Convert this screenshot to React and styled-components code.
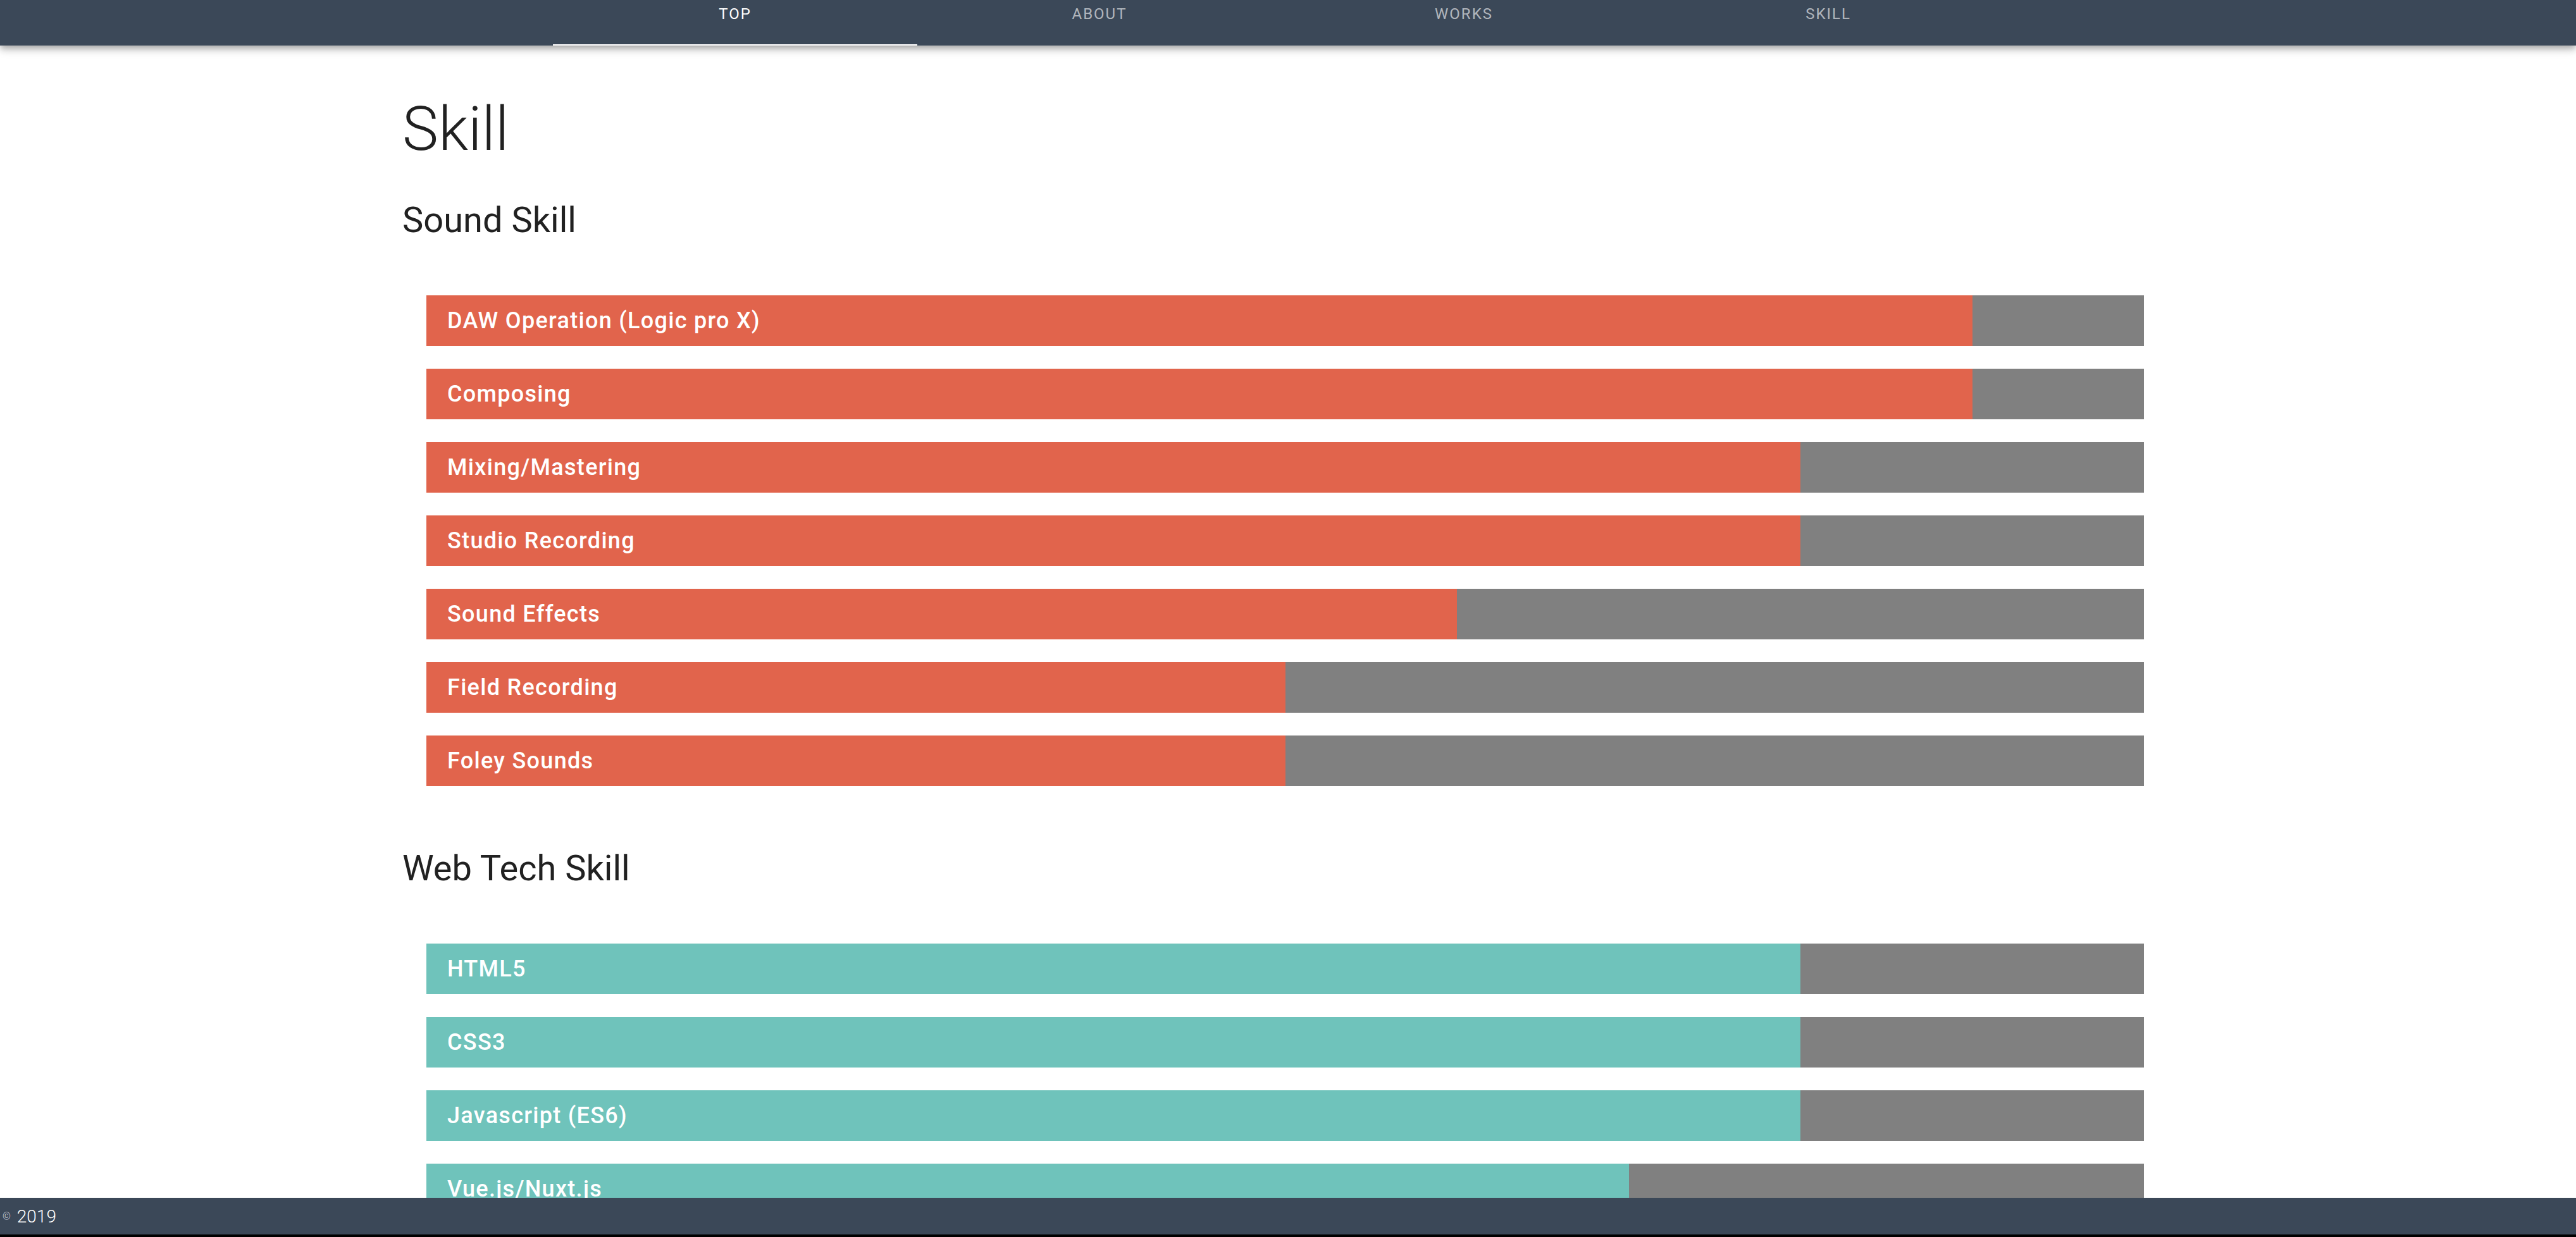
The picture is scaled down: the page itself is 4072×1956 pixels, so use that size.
import React from 'react';
import styled, {createGlobalStyle} from 'styled-components';

const GlobalStyle = createGlobalStyle`
    html, body {
        margin: 0;
        padding: 0;
        background: #ffffff;
        font-family: Roboto, "Liberation Sans", sans-serif;
    }
    * {
        box-sizing: border-box;
    }
`

const NavBar = styled.nav`
    height: 72px;
    background-color: #3b4858;
    display: flex;
    justify-content: center;
    padding-right: 20px;
    box-shadow: 0 4px 8px -2px rgba(0, 0, 0, .2), 0 8px 10px 0 rgba(0, 0, 0, .14), 0 2px 20px 0 rgba(0, 0, 0, .12);
    position: relative;
    z-index: 2;
`

const Tab = styled.a`
    width: 576px;
    height: 72px;
    padding-top: 10px;
    display: flex;
    justify-content: center;
    font-size: 24px;
    line-height: 24px;
    letter-spacing: 2px;
    font-weight: 400;
    color: ${props => props.active ? '#ffffff' : 'rgba(255, 255, 255, .62)'};
    border-bottom: 2px solid ${props => props.active ? '#ffffff' : 'transparent'};
    cursor: pointer;
`

const Main = styled.main`
    width: 2800px;
    margin: 0 auto;
    padding: 84px 0 200px;
    color: #212121;
`

const Title = styled.h1`
    margin: 0 0 68px;
    font-size: 96px;
    line-height: 96px;
    font-weight: 300;
`

const Section = styled.section`
    margin-bottom: 102px;
`

const SubTitle = styled.h2`
    margin: 0 0 91px;
    font-size: 56px;
    line-height: 56px;
    font-weight: 400;
`

const BarList = styled.ul`
    list-style: none;
    margin: 0;
    padding: 0 47px 0 38px;
    display: flex;
    flex-direction: column;
    gap: 36px;
`

const Bar = styled.li`
    height: 80px;
    background-color: #808080;
    display: flex;
    align-items: center;
`

const Fill = styled.div`
    height: 100%;
    background-color: ${props => props.color};
    display: flex;
    align-items: center;
    padding-left: 33px;
`

const Label = styled.span`
    color: #ffffff;
    font-size: 36px;
    font-weight: 500;
    letter-spacing: 1.3px;
    white-space: nowrap;
`

const Footer = styled.footer`
    position: fixed;
    left: 0;
    right: 0;
    bottom: 0;
    height: 62px;
    background-color: #3b4858;
    border-bottom: 4px solid #000000;
    display: flex;
    align-items: center;
    padding-left: 4px;
    color: #ffffff;
    font-size: 28px;
    font-weight: 300;
    z-index: 3;
    .copy{
        font-size: 16px;
        margin-right: 10px;
        color: #d8dbe0;
    }
`

const ORANGE = '#e1644c';
const TEAL = '#6fc3bb';

const sound = [
    {name: 'DAW Operation (Logic pro X)', level: 90},
    {name: 'Composing', level: 90},
    {name: 'Mixing/Mastering', level: 80},
    {name: 'Studio Recording', level: 80},
    {name: 'Sound Effects', level: 60},
    {name: 'Field Recording', level: 50},
    {name: 'Foley Sounds', level: 50},
];

const web = [
    {name: 'HTML5', level: 80},
    {name: 'CSS3', level: 80},
    {name: 'Javascript (ES6)', level: 80},
    {name: 'Vue.js/Nuxt.js', level: 70},
];

const tabs = ['TOP', 'ABOUT', 'WORKS', 'SKILL'];

const SkillBars = ({items, color}) => (
    <BarList>
        {items.map(item => (
            <Bar key={item.name}>
                <Fill color={color} style={{width: `${item.level}%`}}>
                    <Label>{item.name}</Label>
                </Fill>
            </Bar>
        ))}
    </BarList>
);

export default function App() {
    return (
        <>
            <GlobalStyle />
            <NavBar>
                {tabs.map((t, i) => (
                    <Tab key={t} active={i === 0}>{t}</Tab>
                ))}
            </NavBar>
            <Main>
                <Title>Skill</Title>
                <Section>
                    <SubTitle>Sound Skill</SubTitle>
                    <SkillBars items={sound} color={ORANGE} />
                </Section>
                <Section>
                    <SubTitle>Web Tech Skill</SubTitle>
                    <SkillBars items={web} color={TEAL} />
                </Section>
            </Main>
            <Footer>
                <span className='copy'>©</span>2019
            </Footer>
        </>
    );
}
